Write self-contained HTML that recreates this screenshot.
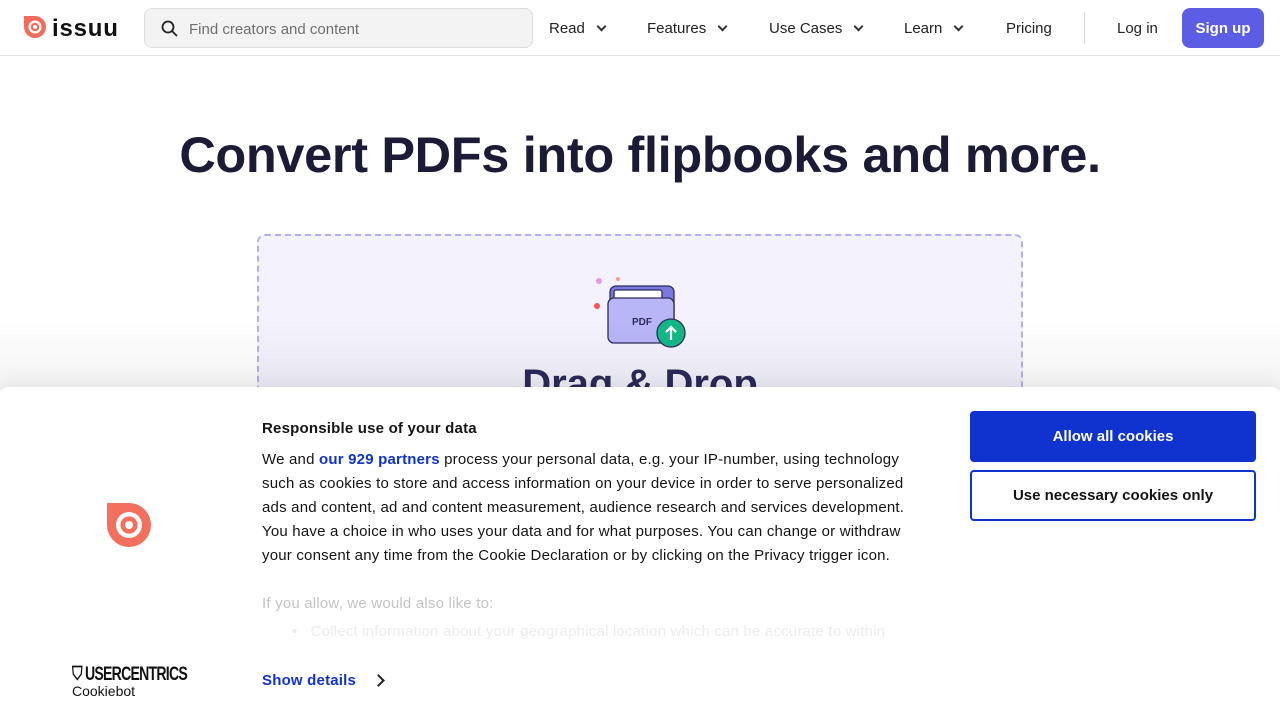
<!DOCTYPE html>
<html><head><meta charset="utf-8"><style>
*{box-sizing:border-box;margin:0;padding:0}
body{width:1280px;height:720px;overflow:hidden;font-family:"Liberation Sans",sans-serif;background:#fff;position:relative;color:#1a1a2e}
.hdr{position:absolute;left:0;top:0;width:1280px;height:56px;border-bottom:1px solid #e5e5e5;background:#fff}
.logo{position:absolute;left:24px;top:16px}
.search{position:absolute;left:144px;top:8px;width:389px;height:40px;background:#f3f3f3;border:1px solid #dedede;border-radius:8px}
.search span{position:absolute;left:44px;top:12px;font-size:15px;color:#707070}
.nav{position:absolute;top:20px;font-size:15px;color:#222}
.chev{display:inline-block;width:7px;height:7px;border-right:2px solid #333;border-bottom:2px solid #333;transform:rotate(45deg);margin-left:13px;position:relative;top:-3px}
.sep{position:absolute;left:1084px;top:12px;width:1px;height:32px;background:#ddd}
.signup{position:absolute;left:1182px;top:8px;width:82px;height:40px;background:#5d5ce4;border-radius:8px;color:#fff;font-weight:bold;font-size:15px;text-align:center;line-height:41px}
h1{position:absolute;left:0;width:1280px;top:125px;text-align:center;font-size:50.5px;font-weight:bold;color:#1c1b36;letter-spacing:-0.35px}
.drop{position:absolute;left:257px;top:234px;width:766px;height:300px;border:2px dashed #b4b0f5;border-radius:8px;background:#f4f3fd}
.dd{position:absolute;left:0;width:1280px;top:362px;text-align:center;font-size:40px;font-weight:bold;color:#2c2a5a}
.fade{position:absolute;left:0;top:320px;width:1280px;height:70px;background:linear-gradient(rgba(0,0,0,0),rgba(0,0,0,0.05))}
.ck{position:absolute;left:0;top:387px;width:1280px;height:333px;background:#fff;border-radius:8px 8px 0 0;box-shadow:0 -4px 20px rgba(0,0,0,.06)}
.t{position:absolute;left:262px;font-size:15px;color:#141414;line-height:24px;width:664px;letter-spacing:0.2px}
.b1{position:absolute;left:970px;top:24px;width:286px;height:51px;background:#1032cf;color:#fff;border-radius:4px;font-weight:bold;font-size:15px;text-align:center;line-height:51px}
.b2{position:absolute;left:970px;top:83px;width:286px;height:51px;border:2px solid #1032cf;color:#141414;border-radius:4px;font-weight:bold;font-size:15px;text-align:center;line-height:47px}
</style></head><body>
<div class="hdr">
<svg class="logo" width="100" height="24" viewBox="0 0 100 24"><path d="M0 0H11A11 11 0 1 1 0 11Z" fill="#f36b5a"/><circle cx="11" cy="11" r="6.5" fill="#fff"/><circle cx="11" cy="11" r="4.3" fill="#f36b5a"/><circle cx="11" cy="11" r="2" fill="#fff"/>
<text x="28" y="20" font-family="Liberation Sans" font-size="24" font-weight="bold" fill="#111" letter-spacing="0.8">issuu</text></svg>
<div class="search"><svg style="position:absolute;left:16px;top:11px" width="18" height="18" viewBox="0 0 18 18"><circle cx="7" cy="7" r="5.5" fill="none" stroke="#222" stroke-width="1.8"/><path d="M11 11l5 5" stroke="#222" stroke-width="1.8"/></svg><span>Find creators and content</span></div>
<div class="nav" style="left:549px">Read<i class="chev"></i></div>
<div class="nav" style="left:647px">Features<i class="chev"></i></div>
<div class="nav" style="left:769px">Use Cases<i class="chev"></i></div>
<div class="nav" style="left:904px">Learn<i class="chev"></i></div>
<div class="nav" style="left:1006px">Pricing</div>
<div class="sep"></div>
<div class="nav" style="left:1117px">Log in</div>
<div class="signup">Sign up</div>
</div>
<h1>Convert PDFs into flipbooks and more.</h1>
<div class="drop"></div>
<svg style="position:absolute;left:590px;top:274px" width="100" height="76" viewBox="0 0 100 76">
<circle cx="9" cy="7" r="3" fill="#e39ae8"/><circle cx="28" cy="5" r="2" fill="#f59a9a"/><circle cx="7" cy="32" r="3" fill="#f25555"/>
<rect x="20" y="12" width="64" height="55" rx="6" fill="#7b78e0" stroke="#2e2c5a" stroke-width="1.3"/>
<rect x="24" y="16" width="48" height="30" rx="2" fill="#fff" stroke="#2e2c5a" stroke-width="1.3"/>
<rect x="18" y="24" width="66" height="45" rx="6" fill="#b8b6f7" stroke="#2e2c5a" stroke-width="1.3"/>
<text x="42" y="51" font-size="10" font-weight="bold" fill="#2e2c5a" font-family="Liberation Sans">PDF</text>
<circle cx="81" cy="59" r="14" fill="#13b886" stroke="#2e2c5a" stroke-width="1.3"/>
<path d="M81 66V53M76 58l5-5 5 5" stroke="#fff" stroke-width="2.2" fill="none"/></svg>
<div class="dd">Drag &amp; Drop</div>
<div class="fade"></div>
<div class="ck">
<svg style="position:absolute;left:107px;top:116px" width="44" height="44" viewBox="0 0 22 22"><path d="M0 0H11A11 11 0 1 1 0 11Z" fill="#f3705e"/><circle cx="11" cy="11" r="6.5" fill="#fff"/><circle cx="11" cy="11" r="4.3" fill="#f3705e"/><circle cx="11" cy="11" r="2" fill="#fff"/></svg>
<div class="t" style="top:30px;font-weight:bold">Responsible use of your data</div>
<div class="t" style="top:61px">We and <b style="color:#1032cf">our 929 partners</b> process your personal data, e.g. your IP-number, using technology such as cookies to store and access information on your device in order to serve personalized ads and content, ad and content measurement, audience research and services development. You have a choice in who uses your data and for what purposes. You can change or withdraw your consent any time from the Cookie Declaration or by clicking on the Privacy trigger icon.</div>
<div class="t" style="top:205px;color:#c4c4c4">If you allow, we would also like to:</div>
<div class="t" style="top:233px;color:#ececec;left:292px;white-space:nowrap">•&nbsp;&nbsp;&nbsp;Collect information about your geographical location which can be accurate to within</div>
<div class="t" style="top:282px;color:#1032cf;font-weight:bold">Show details <span style="display:inline-block;width:9px;height:9px;border-right:2px solid #222;border-top:2px solid #222;transform:rotate(45deg);margin-left:14px"></span></div>
<div style="position:absolute;left:72px;top:277px;font-size:19px;font-weight:bold;letter-spacing:-1px;transform:scaleX(.74);transform-origin:left;color:#111;white-space:nowrap">⛉ USERCENTRICS</div>
<div style="position:absolute;left:72px;top:296px;font-size:14px;color:#111">Cookiebot</div>
<div class="b1">Allow all cookies</div>
<div class="b2">Use necessary cookies only</div>
</div>
</body></html>
